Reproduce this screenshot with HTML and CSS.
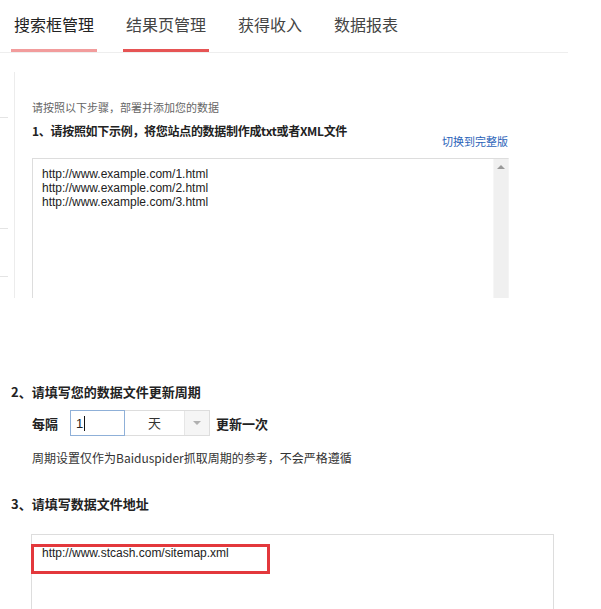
FILE: index.html
```html
<!DOCTYPE html>
<html lang="zh-CN">
    <head>
        <meta charset="utf-8">
        <title>结果页管理</title>
        <link rel="stylesheet" href="styles.css">
    </head>
    <body>
        <div class="tabs">
            <a class="tab tab-hover">搜索框管理</a>
            <a class="tab tab-active">结果页管理</a>
            <a class="tab">获得收入</a>
            <a class="tab">数据报表</a>
        </div>

        <div class="upper">
            <div class="stubs">
                <span class="stub stub-1"></span>
                <span class="stub stub-2"></span>
                <span class="stub stub-3"></span>
            </div>
            <div class="panel">
                <p class="hint">请按照以下步骤，部署并添加您的数据</p>
                <div class="step-head">
                    <h3 class="step">1、请按照如下示例，将您站点的数据制作成txt或者XML文件</h3>
                    <a class="switch">切换到完整版</a>
                </div>
                <div class="sample">
                    <div class="sample-text">
                        http://www.example.com/1.html<br>
                        http://www.example.com/2.html<br>
                        http://www.example.com/3.html
                    </div>
                    <div class="scrollbar"><span class="arrow-up"></span></div>
                </div>
            </div>
        </div>

        <div class="section">
            <h3 class="step step-2">2、请填写您的数据文件更新周期</h3>
            <div class="period">
                <span class="label">每隔</span>
                <span class="num-input">1<span class="caret"></span></span>
                <span class="unit-select">
                    <span class="unit">天</span>
                    <span class="unit-arrow"><span class="arrow-down"></span></span>
                </span>
                <span class="label">更新一次</span>
            </div>
            <p class="note">周期设置仅作为Baiduspider抓取周期的参考，不会严格遵循</p>

            <h3 class="step step-3">3、请填写数据文件地址</h3>
            <div class="address">
                <div class="address-text">http://www.stcash.com/sitemap.xml</div>
                <div class="mark"></div>
            </div>
        </div>
    </body>
</html>
```

FILE: styles.css
```css
html, body {
    margin: 0;
    height: 609px;
    overflow: hidden;
    background: #fff;
    font-family: "Liberation Sans", Arial, "Noto Sans CJK SC", sans-serif;
    color: #333;
}
p, h3 {
    margin: 0;
}
.tabs {
    display: flex;
    width: 557px;
    padding-left: 11px;
    border-bottom: 1px solid #eeeeee;
}
.tab {
    padding: 14px 3px 15px;
    margin-right: 26px;
    font-family: "Noto Sans CJK SC", sans-serif;
    font-size: 16px;
    line-height: 20px;
    color: #444;
    border-bottom: 3px solid transparent;
}
.tab-hover {
    color: #222;
    border-bottom-color: #f29c9c;
}
.tab-active {
    border-bottom-color: #e65454;
}
.upper {
    display: flex;
    margin-top: 19px;
}
.stubs {
    display: flex;
    flex-direction: column;
    width: 14px;
}
.stub {
    display: block;
    width: 8px;
    height: 1px;
    background: #e4e4e4;
}
.stub-1 {
    margin-top: 45px;
}
.stub-2 {
    margin-top: 110px;
}
.stub-3 {
    margin-top: 47px;
}
.panel {
    height: 199px;
    padding: 27px 0 0 17px;
    border-left: 1px solid #ececec;
    overflow: hidden;
}
.hint {
    font-size: 11px;
    line-height: 16px;
    color: #666;
    font-family: "Noto Sans CJK SC", sans-serif;
}
.step-head {
    display: flex;
    justify-content: space-between;
    align-items: flex-end;
    width: 476px;
    margin-top: 8px;
}
.step {
    font-family: "Noto Sans CJK SC", sans-serif;
    font-size: 12px;
    line-height: 16px;
    font-weight: bold;
    color: #222;
}
.step-head .step {
    letter-spacing: -0.3px;
}
.switch {
    font-family: "Noto Sans CJK SC", sans-serif;
    font-size: 11px;
    line-height: 16px;
    color: #2a62b8;
    margin-bottom: -10px;
}
.sample {
    display: flex;
    justify-content: space-between;
    width: 475px;
    height: 160px;
    margin-top: 19px;
    border: 1px solid #dddddd;
    border-right-color: #f4f4f4;
}
.sample-text {
    padding: 8px 0 0 9px;
    font-size: 12px;
    line-height: 14px;
    color: #222;
}
.scrollbar {
    width: 14px;
    background: #f0f0f0;
    border-left: 1px solid #f6f6f6;
    display: flex;
    justify-content: center;
}
.arrow-up {
    margin-top: 6px;
    width: 0;
    height: 0;
    border-left: 4px solid transparent;
    border-right: 4px solid transparent;
    border-bottom: 4px solid #999;
}
.section {
    padding-left: 11px;
}
.step-2 {
    margin-top: 85px;
    font-size: 13px;
    line-height: 18px;
}
.period {
    display: flex;
    align-items: center;
    margin-top: 9px;
    padding-left: 21px;
}
.label {
    font-family: "Noto Sans CJK SC", sans-serif;
    font-size: 13px;
    font-weight: bold;
    color: #222;
}
.num-input {
    display: flex;
    align-items: center;
    box-sizing: border-box;
    width: 55px;
    height: 26px;
    margin-left: 12px;
    padding-left: 5px;
    border: 1px solid #8fb0d8;
    font-size: 13px;
    color: #222;
}
.caret {
    width: 1px;
    height: 15px;
    margin-left: 1px;
    background: #111;
}
.unit-select {
    display: flex;
    box-sizing: border-box;
    width: 85px;
    height: 26px;
    margin-right: 6px;
    border: 1px solid #dddddd;
    border-left: none;
}
.unit {
    flex: 1;
    text-align: center;
    font-family: "Noto Sans CJK SC", sans-serif;
    font-size: 13px;
    line-height: 24px;
    color: #333;
}
.unit-arrow {
    width: 24px;
    background: #f5f5f5;
    border-left: 1px solid #e6e6e6;
    display: flex;
    align-items: center;
    justify-content: center;
}
.arrow-down {
    width: 0;
    height: 0;
    border-left: 4px solid transparent;
    border-right: 4px solid transparent;
    border-top: 4px solid #b0b0b0;
}
.note {
    margin-top: 14px;
    padding-left: 21px;
    font-family: "Noto Sans CJK SC", sans-serif;
    font-size: 12px;
    line-height: 16px;
    color: #333;
}
.step-3 {
    margin-top: 29px;
    font-size: 13px;
    line-height: 18px;
}
.address {
    position: relative;
    width: 521px;
    height: 120px;
    margin: 21px 0 0 20px;
    border: 1px solid #dddddd;
}
.address-text {
    padding: 11px 0 0 10px;
    font-size: 12px;
    line-height: 14px;
    color: #222;
}
.mark {
    position: absolute;
    left: -1px;
    top: 9px;
    width: 233px;
    height: 24px;
    border: 3px solid #e3383c;
}
```
